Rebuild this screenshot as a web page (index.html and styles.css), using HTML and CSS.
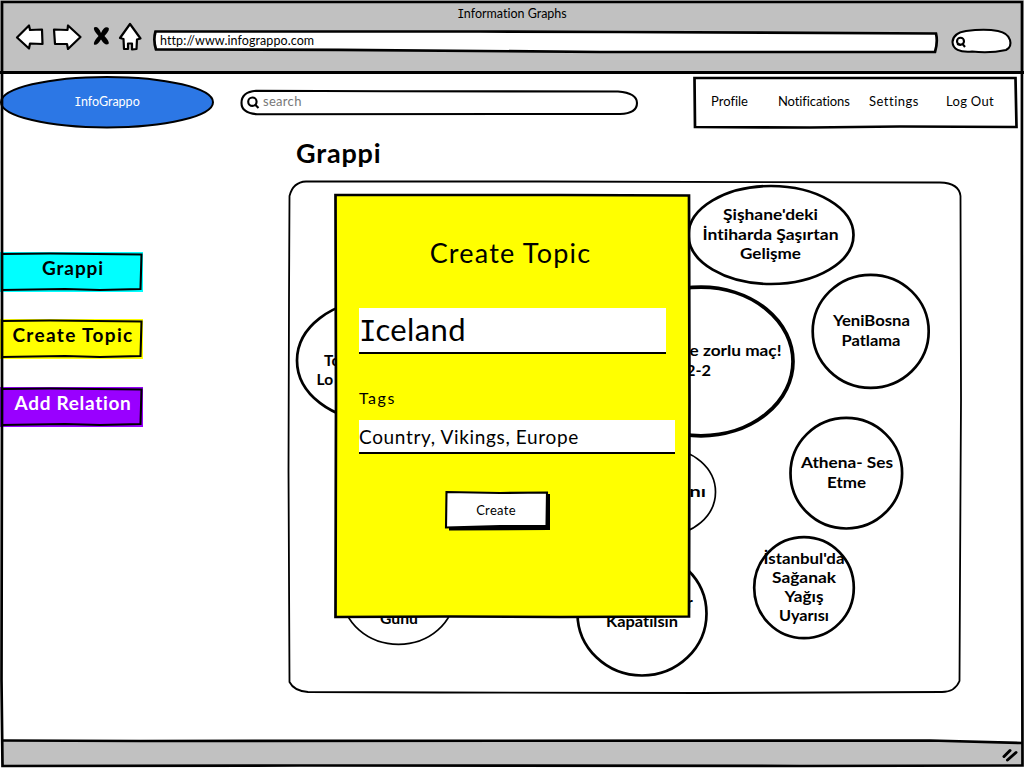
FILE: index.html
```html
<!DOCTYPE html>
<html lang="en">
<head>
<meta charset="utf-8">
<title>Information Graphs</title>
<link rel="stylesheet" href="styles.css">
</head>
<body>
<div class="window">
  <header class="chrome">
    <div class="chrome-title"><span class="slab">I</span>nformation Graphs</div>
    <div class="toolbar">
      <svg class="tools" viewBox="14 20 130 34" width="130" height="34">
        <g fill="#fff" stroke="#000" stroke-width="2.2" stroke-linejoin="round">
          <path d="M17 37.500L29 25.500L30 30L42 29.500L42.500 44L30 43.500L29 48.500Z"/>
          <path d="M80.500 37L68 25.500L67.500 30L54 29.500L55 44L67 44L68 49Z"/>
          <path d="M130 24L120 38L123.500 39L124 49H128V43.500H132V49.500L136.500 49L137 39.500L140.500 38.500Z"/>
        </g>
        <path d="M94 27.500Q98 25.500 101 33Q104 26 108 27.500Q111 29 104.500 36Q110 42 108.500 44Q105 46 101 39.500Q97 46 94 44.500Q93 42 98.500 36Q93 30 94 27.500Z"/>
      </svg>
      <div class="address">
        <svg class="frame" viewBox="153 30 785 22"><path class="fill-white line2" d="M155.500 31.500L480 31.500L620 32L936 33.500Q938 42 935 52L600 52L340 49.800L156 49.500Q153 40 155.500 31.500Z"/></svg>
        <span class="address-text">http://www.infograppo.com</span>
      </div>
      <svg class="find" viewBox="950 27 64 28" width="64" height="28">
        <path class="fill-white line" d="M966 31Q985 28.500 998 31Q1008 33 1010 40Q1012 47 1006 50Q990 53.500 972 51.500Q953 53 952.500 42Q953 33 966 31Z"/>
        <circle cx="960.500" cy="41.300" r="3.500" class="no-fill line"/><path class="no-fill line" d="M962.500 43.800L965 47M957 44L961 45"/>
      </svg>
    </div>
  </header>

  <div class="site-header">
    <a class="logo"><svg class="frame" viewBox="0 76 214 52"><ellipse cx="107" cy="102.200" rx="106" ry="25.300" fill="#2c77e5" stroke="#000" stroke-width="2"/></svg><span class="logo-text"><span class="slab">I</span>nfoGrappo</span></a>
    <div class="search">
      <svg class="frame" viewBox="241 90 397 25">
        <path class="no-fill line" d="M256 90.800L384 91.200L618 91.500Q637 93 637 103Q637 113.500 620 114L257 114.200Q241.500 113 241.500 103Q241.500 92 256 90.800Z"/>
        <circle cx="252.400" cy="101.700" r="4.200" class="no-fill line"/><path class="no-fill line" d="M255 104.500L258.500 108"/>
      </svg>
      <span class="search-text">search</span>
    </div>
    <nav class="nav">
      <svg class="frame" viewBox="694 76 323 52"><path class="no-fill line2" d="M694.500 78L850 78L1015.500 78L1016.500 127L900 126.500L810 127.500L695 127Z"/></svg>
      <a class="n1">Profile</a><a class="n2">Notifications</a><a class="n3">Settings</a><a class="n4">Log Out</a>
    </nav>
  </div>

  <main class="main">
    <aside class="side">
      <a class="side-btn cyan"><svg class="frame" viewBox="0 0 143 40"><path class="no-fill line" d="M2 2L50 1.500L141.500 2.500L140.500 37L100 38L65 37L2 38Z"/></svg><span class="t1">Grappi</span></a>
      <a class="side-btn yellow"><svg class="frame" viewBox="0 0 143 40"><path class="no-fill line" d="M2 2L50 1.500L141.500 2.500L140.500 37L100 38L65 37L2 38Z"/></svg><span class="t2">Create Topic</span></a>
      <a class="side-btn purple"><svg class="frame" viewBox="0 0 143 40"><path class="no-fill line" d="M2 2L50 1.500L141.500 2.500L140.500 37L100 38L65 37L2 38Z"/></svg><span class="t3">Add Relation</span></a>
    </aside>
    <section class="content">
      <h1 class="heading">Grappi</h1>
      <div class="board">
        <svg class="graph" viewBox="289 181 672 512" width="672" height="512">
          <path class="no-fill thin" d="M306 181.500L540 181.500L940 182.500Q959 183 960.500 196L961 400L960 580L959.500 681Q955 692 942 692L700 693L440 692.500L308 692Q294 691 289.500 682L288.500 470L289 300L289.500 196Q293 182 306 181.500Z"/>
          <g class="no-fill">
            <ellipse cx="771" cy="235" rx="82.500" ry="49" stroke-width="2.700"/>
            <ellipse cx="701" cy="361.500" rx="92" ry="74.300" stroke-width="3.700"/>
            <ellipse cx="870.700" cy="331.300" rx="58" ry="56.500" stroke-width="2.700"/>
            <ellipse cx="846.300" cy="473.200" rx="55.800" ry="55.300" stroke-width="2.700"/>
            <ellipse cx="804" cy="587.700" rx="49.800" ry="50.500" stroke-width="2.700"/>
            <ellipse cx="642" cy="613.500" rx="64.500" ry="62" stroke-width="2.700"/>
            <ellipse cx="666" cy="492" rx="49.500" ry="43" stroke-width="1.700"/>
            <ellipse cx="398.500" cy="596" rx="55.500" ry="48.300" stroke-width="1.700"/>
            <ellipse cx="375" cy="360.500" rx="78" ry="60" stroke-width="2.700"/>
          </g>
          <g class="labels">
            <text x="723" y="220" textLength="95" lengthAdjust="spacingAndGlyphs">Şişhane'deki</text>
            <text x="702.500" y="239.500" textLength="136" lengthAdjust="spacingAndGlyphs">İntiharda Şaşırtan</text>
            <text x="740" y="258.500" textLength="61" lengthAdjust="spacingAndGlyphs">Gelişme</text>
            <text x="689.500" y="356" textLength="92" lengthAdjust="spacingAndGlyphs">e zorlu maç!</text>
            <text x="686" y="375.500" textLength="25" lengthAdjust="spacingAndGlyphs">2-2</text>
            <text x="833" y="325.500" textLength="77" lengthAdjust="spacingAndGlyphs">YeniBosna</text>
            <text x="841.500" y="345.500" textLength="59" lengthAdjust="spacingAndGlyphs">Patlama</text>
            <text x="801" y="468" textLength="92" lengthAdjust="spacingAndGlyphs">Athena- Ses</text>
            <text x="827" y="487.500" textLength="39" lengthAdjust="spacingAndGlyphs">Etme</text>
            <text x="763.500" y="563.500" textLength="81" lengthAdjust="spacingAndGlyphs">İstanbul'da</text>
            <text x="772" y="582.500" textLength="64" lengthAdjust="spacingAndGlyphs">Sağanak</text>
            <text x="784.500" y="601.500" textLength="39" lengthAdjust="spacingAndGlyphs">Yağış</text>
            <text x="779" y="620.500" textLength="50" lengthAdjust="spacingAndGlyphs">Uyarısı</text>
            <text x="606" y="627" textLength="72" lengthAdjust="spacingAndGlyphs">Kapatılsın</text>
            <text x="687" y="608">r</text>
            <text x="684" y="496.500" textLength="22" lengthAdjust="spacingAndGlyphs">ını</text>
            <text x="380" y="623.500" textLength="38" lengthAdjust="spacingAndGlyphs">Günü</text>
            <text x="324" y="365.500">To</text>
            <text x="316.500" y="384.500">Lo</text>
          </g>
        </svg>
        <form class="modal">
          <svg class="frame" viewBox="334 193 357 425"><path class="line2" stroke="#000" fill="#ff0" d="M335.500 195L560 195L689 195.500L689.500 400L689 616.500L560 617L450 616.500L335.500 617L336 400Z"/></svg>
          <h2 class="modal-title">Create Topic</h2>
          <div class="input big"><span><span class="slab">I</span>celand</span></div>
          <label class="tags-label">Tags</label>
          <div class="input small"><span>Country, Vikings, Europe</span></div>
          <div class="create"><svg class="frame" viewBox="445 491 105 39"><path d="M449 494L550 494L550 530L449 530.500Z"/><path class="fill-white line" d="M446.500 492L500 493L547 492.500L546.500 526L500 526L446 527.500Z"/></svg><span class="create-text">Create</span></div>
        </form>
      </div>
    </section>
  </main>

  <footer class="status">
    <svg class="frame" viewBox="0 741 1024 27"><path fill="#c1c1c1" stroke="none" d="M2 741H930L1022 743V766H2Z"/><path class="no-fill line2" d="M2 740.500L140 741L930 740.500L1022 743"/>
      <path class="no-fill grip" d="M1004 756.500L1010 750.500M1007.500 760L1016 752.500"/></svg>
  </footer>
  <svg class="frame" viewBox="0 0 1024 768"><path class="no-fill line2" d="M2 2H1022L1021.800 400L1022.500 765.500L800 766L300 765.500L2.500 766L1.500 680L2 400Z"/></svg>
</div>
</body>
</html>
```
FILE: styles.css
```css
* { box-sizing: border-box; }
body { margin: 0; background: #fff; color: #000; font: 13px Lato, "Open Sans", sans-serif; font-variant-ligatures: none; }
h1, h2 { margin: 0; }
.window { position: relative; display: flex; flex-direction: column; width: 1024px; height: 768px; overflow: hidden; }
.frame { position: absolute; inset: 0; width: 100%; height: 100%; overflow: visible; }
.frame ~ span, .frame ~ a { position: relative; }
.no-fill { fill: none; stroke: #000; }
.fill-white { fill: #fff; stroke: #000; }
.thin { stroke-width: 1.8; }
.line { stroke-width: 2.1; }
.line2 { stroke-width: 2.7; }
.grip { stroke-width: 3; stroke-linecap: round; }
.slab { font-family: "DejaVu Sans Mono", monospace; font-size: .94em; letter-spacing: -.04em; }

.chrome { height: 74px; background: #c1c1c1; border-bottom: 3px solid #000; }
.chrome-title { height: 20px; padding-top: 4px; line-height: 20px; text-align: center; font-size: 12.5px; white-space: nowrap; }
.toolbar { display: flex; align-items: flex-start; padding-left: 14px; }
.tools { flex: none; }
.address { position: relative; width: 785px; height: 22px; margin: 10px 0 0 9px; padding-left: 7px; }
.address-text { font-size: 12.5px; line-height: 22px; letter-spacing: .08px; }
.find { flex: none; margin: 7px 0 0 12px; }

.site-header { display: flex; align-items: flex-start; height: 59px; padding-top: 2px; }
.logo { position: relative; width: 214px; height: 52px; text-align: center; line-height: 51px; color: #fff; }
.logo-text { font-size: 12.5px; }
.search { position: relative; width: 397px; height: 25px; margin: 14px 0 0 27px; padding-left: 22px; line-height: 23px; letter-spacing: .3px; color: #777; }
.nav { position: relative; display: flex; width: 323px; height: 52px; margin: 0 0 0 56px; padding-left: 17px; line-height: 51px; white-space: nowrap; }
.n1 { width: 67px; } .n2 { width: 91px; letter-spacing: -.1px; } .n3 { width: 77px; letter-spacing: .5px; } .n4 { letter-spacing: .3px; }

.main { display: flex; height: 608px; }
.side { display: flex; flex-direction: column; gap: 27px; width: 289px; padding-top: 119px; }
.side-btn { position: relative; width: 143px; height: 40px; padding-left: 3px; text-align: center; font-size: 19px; font-weight: 700; line-height: 32px; white-space: nowrap; }
.t1 { letter-spacing: .9px; }
.t2 { letter-spacing: 1.35px; }
.t3 { letter-spacing: .7px; }
.cyan { background: #0ff; }
.yellow { background: #ff0; }
.purple { margin-top: 1px; background: #90f; color: #fff; }
.heading { height: 48px; padding-left: 7px; font-size: 27px; line-height: 39px; letter-spacing: .8px; }
.board { position: relative; width: 672px; height: 512px; }
.graph { display: block; overflow: visible; }
.labels { font-size: 15.5px; font-weight: 700; }

.modal { position: absolute; left: 45px; top: 12px; display: flex; flex-direction: column; align-items: flex-start; width: 357px; height: 425px; padding-left: 25px; }
.modal > :not(.frame) { position: relative; }
.modal-title { width: 303px; margin-top: 40px; font-size: 27px; font-weight: 400; line-height: 40px; letter-spacing: 1.2px; text-align: center; white-space: nowrap; }
.input { background: #fff; border-bottom: 2px solid #000; white-space: nowrap; }
.big { width: 307px; height: 46px; margin-top: 35px; font-size: 31px; line-height: 43px; letter-spacing: .4px; }
.tags-label { margin-top: 34px; font-size: 16px; line-height: 20px; letter-spacing: 1.5px; }
.small { width: 316px; height: 34px; margin-top: 12px; font-size: 19px; line-height: 33px; letter-spacing: .65px; }
.create { width: 105px; height: 39px; margin: 37px 0 0 86px; padding-right: 3px; text-align: center; line-height: 38px; letter-spacing: .3px; }

.status { position: relative; height: 27px; }
```
